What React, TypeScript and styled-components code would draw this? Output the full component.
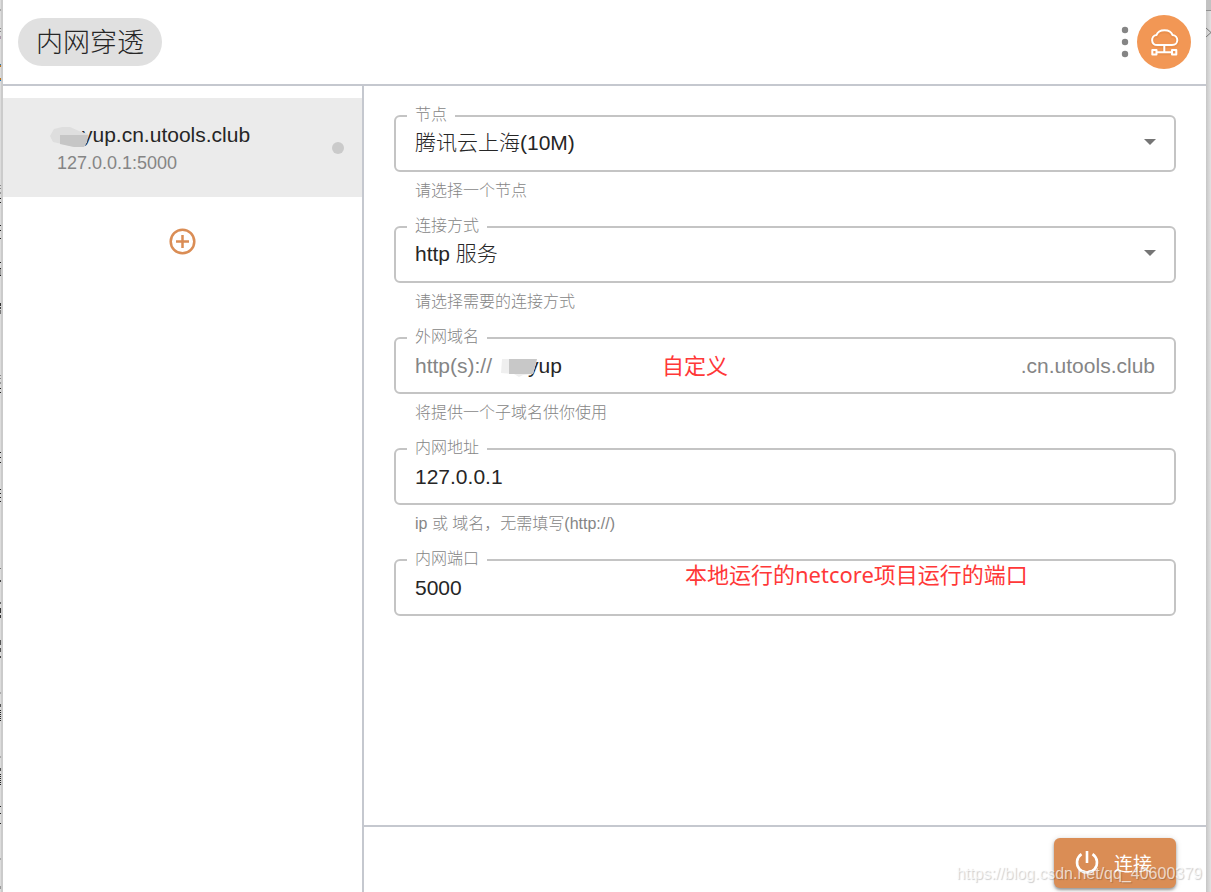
import React, { useState } from "react";
import styled, { createGlobalStyle } from "styled-components";

const ink = "#262626";
const muted = "#858585";
const accent = "#da8d55";
const line = "#c5c8cf";

const GlobalStyle = createGlobalStyle`
  *, *::before, *::after { box-sizing: border-box; }
  body {
    margin: 0;
    background: #fff;
    color: ${ink};
    font-family: "Liberation Sans", "Noto Sans CJK SC", sans-serif;
    font-weight: 300;
  }
  button, input, select { font: inherit; color: inherit; }
`;

const Desktop = styled.div`
  display: flex;
  min-height: 100vh;
`;

const LeftEdge = styled.div`
  position: relative;
  flex: none;
  width: 3px;
  overflow: hidden;
  background: #dcdcdc;
  border-right: 2px solid #cbcbcb;
`;

const RightEdge = styled(LeftEdge)`
  width: 5px;
  border-right: 0;
  background: linear-gradient(to right, #c6c6c6, #e2e2e2);
`;

const EdgeDrawing = styled.svg`
  position: absolute;
  top: 0;
  left: 0;
`;

const Window = styled.div`
  display: flex;
  flex: 1;
  flex-direction: column;
  min-width: 0;
  background: #fff;
`;

const Header = styled.header`
  display: flex;
  align-items: center;
  justify-content: space-between;
  height: 86px;
  padding: 0 15px;
  border-bottom: 2px solid ${line};
`;

const Title = styled.h1`
  margin: 0;
  padding: 2px 18px 0;
  border-radius: 24px;
  background: #e0e0e0;
  font-size: 27px;
  font-weight: 300;
  line-height: 46px;
`;

const HeaderActions = styled.div`
  display: flex;
  align-items: center;
  gap: 8px;
`;

const IconButton = styled.button`
  display: flex;
  padding: 0;
  border: 0;
  background: none;
  cursor: pointer;
`;

const Body = styled.div`
  display: flex;
  flex: 1;
`;

const Sidebar = styled.aside`
  display: flex;
  flex: none;
  flex-direction: column;
  align-items: center;
  gap: 31px;
  width: 361px;
  padding-top: 12px;
  border-right: 2px solid ${line};
`;

const TunnelItem = styled.button`
  display: flex;
  align-items: center;
  justify-content: space-between;
  width: 100%;
  height: 99px;
  padding: 0 18px 0 54px;
  border: 0;
  background: #ebebeb;
  text-align: left;
  cursor: pointer;
`;

const TunnelText = styled.span`
  display: flex;
  flex-direction: column;
`;

const TunnelName = styled.span`
  position: relative;
  padding-left: 25px;
  font-size: 21px;
  line-height: 30px;
`;

const TunnelAddress = styled.span`
  color: ${muted};
  font-size: 18px;
  line-height: 26px;
`;

const StatusDot = styled.span`
  width: 12px;
  height: 12px;
  border-radius: 50%;
  background: #cacaca;
`;

const Smudge = styled.svg<{ $top: number; $left: number }>`
  position: absolute;
  top: ${(p) => p.$top}px;
  left: ${(p) => p.$left}px;
  pointer-events: none;
`;

const Main = styled.main`
  display: flex;
  flex: 1;
  flex-direction: column;
  min-width: 0;
`;

const Form = styled.form`
  display: flex;
  flex: 1;
  flex-direction: column;
  gap: 14px;
  padding: 29px 30px 24px;
`;

const Field = styled.div`
  display: flex;
  flex-direction: column;
`;

const Outline = styled.div`
  position: relative;
  display: flex;
  align-items: center;
  height: 57px;
  padding: 0 19px;
  border: 2px solid #c4c4c4;
  border-radius: 6px;
  font-size: 21px;
`;

const SelectOutline = styled(Outline)`
  padding: 0 18px 3px 19px;
`;

const Label = styled.label`
  position: absolute;
  top: -14px;
  left: 11px;
  padding: 0 8px;
  background: #fff;
  color: ${muted};
  font-size: 16px;
  line-height: 24px;
`;

const TextInput = styled.input`
  flex: 1;
  width: 100%;
  min-width: 0;
  height: 50px;
  padding: 0;
  border: 0;
  outline: 0;
  background: transparent;
`;

const Select = styled.select`
  flex: 1;
  height: 50px;
  padding: 0;
  border: 0;
  outline: 0;
  appearance: none;
  background: transparent;
`;

const ArrowIcon = styled.svg`
  pointer-events: none;
`;

const Affix = styled.span`
  color: ${muted};
`;

const MaskedInput = styled.span`
  position: relative;
  display: flex;
  flex: 1;
  align-items: center;
  padding-left: 36px;
`;

const Helper = styled.p`
  margin: 0;
  padding: 0 21px;
  color: ${muted};
  font-size: 16px;
  line-height: 38px;
  height: 40px;
`;

const Note = styled.span<{ $top: number; $left: number }>`
  position: absolute;
  top: ${(p) => p.$top}px;
  left: ${(p) => p.$left}px;
  color: #ff3838;
  font-family: "Noto Sans", "Noto Sans CJK SC", sans-serif;
  font-size: 22px;
  font-weight: 400;
  line-height: 32px;
  white-space: nowrap;
  pointer-events: none;
`;

const Footer = styled.footer`
  position: relative;
  display: flex;
  justify-content: flex-end;
  height: 67px;
  padding: 11px 30px 0;
  border-top: 2px solid ${line};
`;

const ConnectButton = styled.button`
  display: flex;
  align-items: center;
  justify-content: center;
  gap: 14px;
  width: 122px;
  height: 50px;
  padding: 0 4px 2px 0;
  border: 0;
  border-radius: 6px;
  background: ${accent};
  box-shadow: 0 2px 3px rgba(0, 0, 0, 0.35), 0 1px 6px rgba(0, 0, 0, 0.15);
  color: #fff;
  font-size: 19px;
  font-weight: 400;
  cursor: pointer;
`;

const Watermark = styled.span`
  position: absolute;
  right: 4px;
  bottom: 6px;
  color: rgba(255, 255, 255, 0.7);
  font-size: 16px;
  line-height: 24px;
  text-shadow: 1px 1px 1px rgba(0, 0, 0, 0.2);
  pointer-events: none;
`;

/* Slivers of the page behind the window: [top, height, colour] */
const slivers: [number, number, string][] = [
  [9, 2, "#aaa"], [28, 1, "#888"], [31, 1, "#888"], [36, 3, "#a9a"],
  [64, 1, "#2a7bbb"], [65, 2, "#b8741e"], [78, 2, "#b8741e"], [80, 1, "#2a7bbb"],
  [185, 1, "#888"], [188, 1, "#888"], [192, 2, "#999"], [198, 1, "#222"], [202, 1, "#222"],
  [225, 1, "#222"], [230, 1, "#222"], [238, 1, "#222"], [262, 1, "#222"], [268, 1, "#222"],
  [269, 6, "#999"], [275, 1, "#222"], [303, 3, "#333"], [307, 2, "#444"], [310, 4, "#777"],
  [375, 1, "#888"], [378, 1, "#888"], [382, 2, "#999"], [388, 1, "#222"], [392, 1, "#222"],
  [452, 1, "#222"], [457, 1, "#222"], [462, 1, "#222"], [489, 1, "#222"], [493, 1, "#222"],
  [497, 1, "#222"], [501, 1, "#222"], [568, 1, "#777"], [580, 2, "#444"], [602, 2, "#666"],
  [608, 5, "#333"], [615, 3, "#333"], [640, 5, "#555"], [648, 4, "#555"], [656, 2, "#444"],
  [692, 2, "#aaa"], [704, 3, "#555"], [710, 1, "#222"], [712, 1, "#222"], [714, 1, "#222"],
  [716, 1, "#222"], [718, 1, "#222"], [720, 1, "#222"], [756, 2, "#aaa"], [768, 3, "#555"],
  [774, 1, "#222"], [776, 1, "#222"], [778, 1, "#222"], [780, 1, "#222"], [782, 1, "#222"],
  [784, 1, "#222"], [806, 1, "#222"], [813, 1, "#222"], [823, 1, "#222"], [858, 2, "#aaa"],
  [886, 3, "#999"],
];

function NameSmudge() {
  return (
    <Smudge $top={7} $left={-7} width="40" height="22" viewBox="0 0 40 22" aria-hidden="true">
      <path d="M0 9 4 2 12 0 20 0 29 4 38 7 37 15 34 20 24 20 12 17 3 15Z" fill="#dedede" />
      <path d="M10 8H38L37 15 34 20 24 20 10 17Z" fill="#c6c6c6" />
    </Smudge>
  );
}

function DomainSmudge() {
  return (
    <Smudge $top={17} $left={9} width="37" height="20" viewBox="0 0 37 20" aria-hidden="true">
      <path d="M1 1H36L32 16 22 17 18 19 13 16 0 15Z" fill="#efefef" />
      <path d="M8 1H36L32 16H8Z" fill="#c8c8c8" />
    </Smudge>
  );
}

function Arrow() {
  return (
    <ArrowIcon width="12" height="6" viewBox="0 0 12 6" aria-hidden="true">
      <path d="M0 0H12L6 6Z" fill="#757575" />
    </ArrowIcon>
  );
}

export default function App() {
  const [node, setNode] = useState("shanghai");
  const [mode, setMode] = useState("http");
  const [domain, setDomain] = useState("yup");
  const [host, setHost] = useState("127.0.0.1");
  const [port, setPort] = useState("5000");

  return (
    <>
      <GlobalStyle />
      <Desktop>
        <LeftEdge aria-hidden="true">
          <EdgeDrawing width="1" height="892">
            {slivers.map(([top, height, fill]) => (
              <rect key={top} y={top} width="1" height={height} fill={fill} />
            ))}
          </EdgeDrawing>
        </LeftEdge>
        <Window>
          <Header>
            <Title>内网穿透</Title>
            <HeaderActions>
              <IconButton type="button" aria-label="更多">
                <svg width="8" height="32" viewBox="0 0 8 32" fill="#858585">
                  <circle cx="4" cy="4" r="3.200" />
                  <circle cx="4" cy="16" r="3.200" />
                  <circle cx="4" cy="28" r="3.200" />
                </svg>
              </IconButton>
              <IconButton type="button" aria-label="内网穿透">
                <svg width="54" height="54" viewBox="0 0 54 54">
                  <circle cx="27" cy="27" r="27" fill="#f29755" />
                  <g fill="none" stroke="#d9803f" strokeOpacity="0.350" strokeWidth="4" transform="translate(0 1)">
                    <path d="M20.500 30C13.500 30 13.500 20.500 19.500 20C21.500 13.500 33.500 13.500 35.500 20C42 20.500 42 30 35 30Z" />
                    <path d="M27.300 30V37.300M20 37.300H34.500" />
                  </g>
                  <g fill="none" stroke="#fff" strokeWidth="2" strokeLinejoin="round">
                    <path d="M20.500 30C13.500 30 13.500 20.500 19.500 20C21.500 13.500 33.500 13.500 35.500 20C42 20.500 42 30 35 30Z" />
                    <path d="M27.300 30V37.300M20 37.300H34.500" />
                    <path d="M15.300 35H19.500V39.500H15.300ZM35 35H39.300V39.500H35Z" />
                  </g>
                </svg>
              </IconButton>
            </HeaderActions>
          </Header>
          <Body>
            <Sidebar>
              <TunnelItem type="button">
                <TunnelText>
                  <TunnelName>
                    yup.cn.utools.club
                    <NameSmudge />
                  </TunnelName>
                  <TunnelAddress>127.0.0.1:5000</TunnelAddress>
                </TunnelText>
                <StatusDot />
              </TunnelItem>
              <IconButton type="button" aria-label="添加">
                <svg width="27" height="27" viewBox="0 0 27 27" fill="none" stroke={accent}>
                  <circle cx="13.500" cy="13.500" r="11.800" strokeWidth="2.500" />
                  <path d="M13.500 7v13M7 13.500h13" strokeWidth="2.500" />
                </svg>
              </IconButton>
            </Sidebar>
            <Main>
              <Form onSubmit={(e) => e.preventDefault()}>
                <Field>
                  <SelectOutline>
                    <Label htmlFor="node">节点</Label>
                    <Select id="node" value={node} onChange={(e) => setNode(e.target.value)}>
                      <option value="shanghai">腾讯云上海(10M)</option>
                    </Select>
                    <Arrow />
                  </SelectOutline>
                  <Helper>请选择一个节点</Helper>
                </Field>
                <Field>
                  <SelectOutline>
                    <Label htmlFor="mode">连接方式</Label>
                    <Select id="mode" value={mode} onChange={(e) => setMode(e.target.value)}>
                      <option value="http">http 服务</option>
                    </Select>
                    <Arrow />
                  </SelectOutline>
                  <Helper>请选择需要的连接方式</Helper>
                </Field>
                <Field>
                  <Outline>
                    <Label htmlFor="domain">外网域名</Label>
                    <Affix>http(s)://</Affix>
                    <MaskedInput>
                      <TextInput id="domain" value={domain} onChange={(e) => setDomain(e.target.value)} />
                      <DomainSmudge />
                    </MaskedInput>
                    <Affix>.cn.utools.club</Affix>
                    <Note $top={10} $left={266}>自定义</Note>
                  </Outline>
                  <Helper>将提供一个子域名供你使用</Helper>
                </Field>
                <Field>
                  <Outline>
                    <Label htmlFor="host">内网地址</Label>
                    <TextInput id="host" value={host} onChange={(e) => setHost(e.target.value)} />
                  </Outline>
                  <Helper>ip 或 域名，无需填写(http://)</Helper>
                </Field>
                <Field>
                  <Outline>
                    <Label htmlFor="port">内网端口</Label>
                    <TextInput id="port" value={port} onChange={(e) => setPort(e.target.value)} />
                    <Note $top={-3} $left={289}>本地运行的netcore项目运行的端口</Note>
                  </Outline>
                </Field>
              </Form>
              <Footer>
                <ConnectButton type="button">
                  <svg width="26" height="26" viewBox="0 0 26 26" fill="none" stroke="#fff" strokeWidth="2.600">
                    <path d="M13 2v12M7.500 5.200a10 10 0 1 0 11 0" />
                  </svg>
                  连接
                </ConnectButton>
                <Watermark>https://blog.csdn.net/qq_40600379</Watermark>
              </Footer>
            </Main>
          </Body>
        </Window>
        <RightEdge aria-hidden="true">
          <EdgeDrawing width="5" height="44">
            <path d="M0 0H5V10H0Z" fill="#c2c2c2" />
            <path d="M0 10H5V11H0Z" fill="#909090" />
            <path d="M0 28 5 32.500 0 37" fill="none" stroke="#777" />
          </EdgeDrawing>
        </RightEdge>
      </Desktop>
    </>
  );
}
